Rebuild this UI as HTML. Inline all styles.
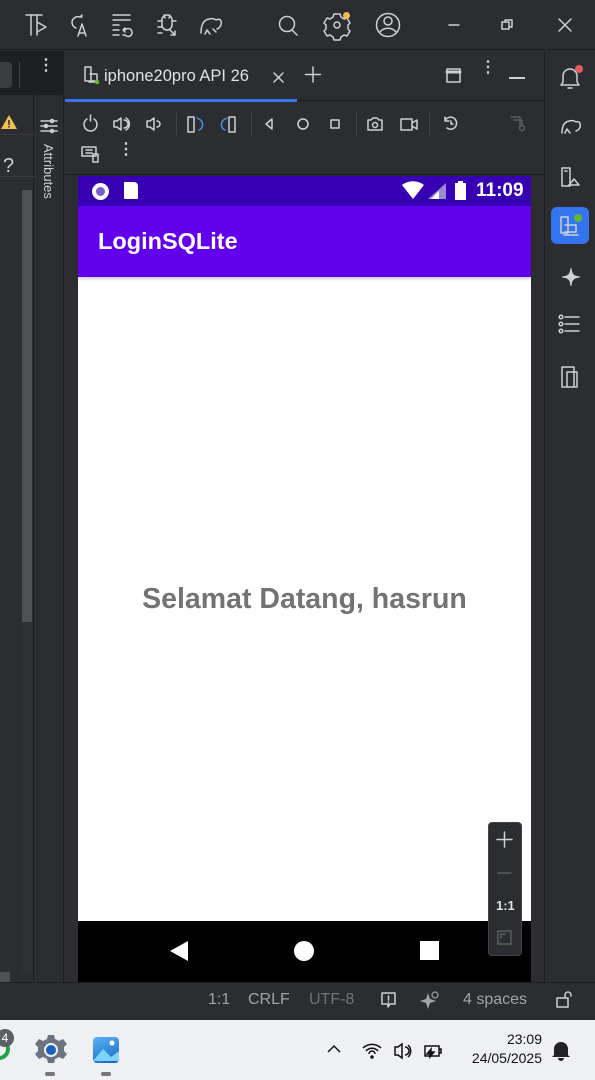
<!DOCTYPE html>
<html><head><style>
*{margin:0;padding:0;box-sizing:border-box}
body{width:595px;height:1080px;overflow:hidden;background:#2b2d30;font-family:"Liberation Sans",sans-serif;position:relative}
.a{position:absolute}
svg{position:absolute;overflow:visible}
.ic{stroke:#ced0d6;stroke-width:1.5;fill:none;stroke-linecap:round;stroke-linejoin:round}
</style></head><body>
<!-- title bar -->
<div class="a" style="left:0;top:0;width:595px;height:50px;background:#2b2d30;border-bottom:1px solid #1e1f22"></div>
<svg class="ic" style="left:0;top:0" width="595" height="50" stroke-width="1.7">
<path d="M26 15h16M31 15v20M37 15v20M37 22l9 5-9 5"/>
<path d="M72 22a6 6 0 0 1 8-5l2-2m0 2l-2 0M72 22a6 6 0 0 0 4 6"/><path d="M78 36l4-12 4 12M79 33h6"/>
<path d="M113 15h17M113 20h17M113 25h6M113 30h6M113 35h6M125 30a4 4 0 1 1 0 5h-2M125 28l-2 2 2 2"/>
<path d="M162 20a5 5 0 0 1 10 0v5a5 5 0 0 1-10 0zM158 21h4M172 21h4M158 27h4M158 33h4M164 15l1 3M170 15l-1 3M170 30l5 5M175 31v4h-4"/>
<path d="M201 33c0-7 2-13 8-14 3-1 6 0 7 1 2-1 4-1 5 1 1 3-1 7-4 8M205 34l2-4 3 4M213 29l3 3"/>
<circle cx="287" cy="24" r="7.5"/><path d="M292 30l5 5"/>
<circle cx="337" cy="25" r="3"/><path d="M334 14h6l1 3 3 2 3-1 3 5-2 2v4l2 2-3 5-3-1-3 2-1 3h-6l-1-3-3-2-3 1-3-5 2-2v-4l-2-2 3-5 3 1 3-2z"/>
<circle cx="388" cy="25" r="11.5"/><circle cx="388" cy="21" r="4"/><path d="M380 32c4-5 12-5 16 0"/>
<path d="M449 25h10"/><path d="M502 22h7v7h-7zM505 22v-2h7v7h-3"/><path d="M559 19l12 12M571 19l-12 12"/>
</svg>
<div class="a" style="left:343px;top:12px;width:7px;height:7px;border-radius:50%;background:#f0c050"></div>
<!-- left panel -->
<div class="a" style="left:0;top:51px;width:64px;height:44px;background:#1e1f22"></div>
<div class="a" style="left:0;top:62px;width:12px;height:26px;background:#3a3c40;border-radius:0 4px 4px 0"></div>
<div class="a" style="left:19px;top:62px;width:1px;height:26px;background:#43454a"></div>
<div class="a" style="left:38px;top:62px;color:#ced0d6;font-size:16px;font-weight:bold;line-height:8px">⋮</div>
<div class="a" style="left:0;top:95px;width:34px;height:887px;background:#2b2d30;border-right:1px solid #1e1f22"></div>
<svg style="left:0;top:112px" width="20" height="20"><path d="M9 3l8 14H1z" fill="#f0c050"/><rect x="8.2" y="8" width="1.6" height="5" fill="#333"/><rect x="8.2" y="14" width="1.6" height="1.6" fill="#333"/></svg>
<div class="a" style="left:0;top:134px;width:34px;height:1px;background:#393b40"></div>
<div class="a" style="left:3px;top:155px;color:#ced0d6;font-size:20px">?</div>
<div class="a" style="left:0;top:176px;width:34px;height:1px;background:#393b40"></div>
<div class="a" style="left:22px;top:190px;width:10px;height:432px;background:#4e5054"></div>
<div class="a" style="left:22px;top:622px;width:10px;height:350px;background:#2f3134"></div>
<div class="a" style="left:0;top:972px;width:10px;height:10px;background:#4e5054"></div>
<div class="a" style="left:35px;top:95px;width:29px;height:887px;background:#2b2d30;border-right:1px solid #1e1f22"></div>
<svg class="ic" style="left:40px;top:118px" width="20" height="20" stroke-width="1.2"><path d="M1 3h16M1 8h16M1 13h16"/><circle cx="12" cy="3" r="1.5"/><circle cx="6" cy="8" r="1.5"/><circle cx="12" cy="13" r="1.5"/></svg>
<div class="a" style="left:56px;top:144px;transform-origin:0 0;transform:rotate(90deg);color:#ced0d6;font-size:13px;white-space:nowrap">Attributes</div>
<!-- tab row -->
<div class="a" style="left:65px;top:51px;width:479px;height:50px;background:#2b2d30;border-bottom:1px solid #1e1f22"></div>
<div class="a" style="left:65px;top:99px;width:232px;height:3px;background:#3574f0"></div>
<svg class="ic" style="left:82px;top:66px" width="20" height="20" stroke-width="1.3"><path d="M3 1h6v14H3zM8 8h7v7H8M7 16h9" /><circle cx="15" cy="16" r="2.3" fill="#5fb832" stroke="none"/></svg>
<div class="a" style="left:104px;top:67px;color:#dfe1e5;font-size:16.5px">iphone20pro API 26</div>
<svg class="ic" style="left:273px;top:72px" width="12" height="12" stroke="#6f737a" stroke-width="1.2"><path d="M1 1l9 9M10 1l-9 9"/></svg>
<svg class="ic" style="left:305px;top:66px" width="18" height="18"><path d="M8 1v15M0.5 8.5h15"/></svg>
<svg class="ic" style="left:446px;top:68px" width="16" height="16"><rect x="1" y="1" width="13" height="13"/><path d="M1 4h13" stroke-width="3"/></svg>
<div class="a" style="left:480px;top:64px;color:#ced0d6;font-size:16px;font-weight:bold;line-height:8px">⋮</div>
<div class="a" style="left:509px;top:77px;width:16px;height:1.5px;background:#ced0d6"></div>
<!-- toolbar -->
<div class="a" style="left:65px;top:102px;width:479px;height:73px;background:#2b2d30;border-bottom:1px solid #1e1f22"></div>
<svg class="ic" style="left:0;top:0" width="545" height="180" stroke-width="1.3">
<path d="M87 119a6.5 6.5 0 1 0 7 0M90.5 115v6"/>
<path d="M114 121h3l4-3v12l-4-3h-3zM124 120a4 4 0 0 1 0 8M126 118a7 7 0 0 1 0 12"/>
<path d="M147 121h3l4-3v12l-4-3h-3zM157 121a3 3 0 0 1 0 6"/>
<path d="M188 117h6v15h-6z"/><path d="M199 119a6 6 0 0 1 0 11M199 119l-2-1" stroke="#4a88e8"/>
<path d="M229 117h6v15h-6z" /><path d="M225 119a6 6 0 0 0 0 11M225 119l2-1" stroke="#4a88e8"/>
<path d="M272 119l-6 5 6 5z"/><circle cx="303" cy="124" r="5"/><rect x="331" y="120" width="8" height="8"/>
<path d="M368 120h3l2-2h4l2 2h3v10h-14z"/><circle cx="375" cy="125" r="2.5"/>
<path d="M401 119h11v11h-11zM412 123l5-3v9l-5-3"/>
<path d="M445 121a6 6 0 1 1 2 7M445 117v4h4M451 121v3h2"/>
<path d="M511 117h9v8M514 120h8v6" stroke="#5a5d63"/><circle cx="522" cy="128" r="2.5" stroke="#5a5d63"/>
<path d="M82 147h14v9h-14zM86 150h6M86 153h6M93 154h5v8h-5z"/>
</svg>
<div class="a" style="left:176px;top:113px;width:1px;height:22px;background:#43454a"></div>
<div class="a" style="left:251px;top:113px;width:1px;height:22px;background:#43454a"></div>
<div class="a" style="left:356px;top:113px;width:1px;height:22px;background:#43454a"></div>
<div class="a" style="left:429px;top:113px;width:1px;height:22px;background:#43454a"></div>
<div class="a" style="left:118px;top:146px;color:#ced0d6;font-size:16px;font-weight:bold;line-height:8px">⋮</div>
<!-- device -->
<div class="a" style="left:78px;top:176px;width:453px;height:30px;background:#3700b3"></div>
<div class="a" style="left:92px;top:183px;width:17px;height:17px;border-radius:50%;background:#fff"></div>
<div class="a" style="left:96px;top:187px;width:9px;height:9px;border-radius:50%;background:#7a5fd0"></div>
<div class="a" style="left:124px;top:182px;width:14px;height:17px;background:#fff;border-radius:1px 4px 1px 1px"></div>
<svg style="left:400px;top:180px" width="80" height="22"><path d="M2 5a18 18 0 0 1 22 0L13 19z" fill="#fff"/><path d="M46 3v16H28z" fill="#9b8ad8"/><path d="M39 11v8h-8z" fill="#fff"/><rect x="55" y="3" width="11" height="17" fill="#fff"/><rect x="58" y="1" width="5" height="3" fill="#fff"/></svg>
<div class="a" style="left:476px;top:180px;color:#fff;font-size:19px;font-weight:bold">11:09</div>
<div class="a" style="left:78px;top:277px;width:453px;height:644px;background:#fff"></div>
<div class="a" style="left:78px;top:206px;width:453px;height:71px;background:#6200ee;box-shadow:0 2px 3px rgba(0,0,0,.2)"></div>
<div class="a" style="left:98px;top:228px;color:#fff;font-size:23.5px;font-weight:bold">LoginSQLite</div>
<div class="a" style="left:78px;top:583px;width:453px;text-align:center;color:#737373;font-size:28.5px;font-weight:bold">Selamat Datang, hasrun</div>
<div class="a" style="left:78px;top:921px;width:453px;height:61px;background:#000"></div>
<svg style="left:160px;top:938px" width="290" height="28"><path d="M28 3v20L10 13z" fill="#fff"/><circle cx="144" cy="13" r="10" fill="#fff"/><rect x="260" y="3" width="19" height="19" fill="#fff"/></svg>
<!-- zoom control -->
<div class="a" style="left:488px;top:822px;width:34px;height:134px;background:#2b2d30;border:1px solid #43454a;border-radius:4px"></div>
<svg class="ic" style="left:496px;top:830px" width="18" height="120"><path d="M8.5 2v15M1 9.5h15"/><path d="M2 43h13" stroke="#5a5d63"/><rect x="2" y="101" width="13" height="13" stroke="#5a5d63"/><path d="M5 104h4M5 104v4" stroke="#5a5d63"/></svg>
<div class="a" style="left:496px;top:898px;color:#dfe1e5;font-size:13px;font-weight:bold">1:1</div>
<!-- right bar -->
<div class="a" style="left:544px;top:51px;width:1px;height:931px;background:#1e1f22"></div>
<svg class="ic" style="left:545px;top:51px" width="50" height="350">
<path d="M18 31v-6a7 7 0 0 1 14 0v6l2 3H16zM23 37h4"/>
<path d="M17 82c0-7 2-11 7-12 3-1 6 0 7 1 2-1 4 0 4 2 1 3-1 6-4 7M20 82l2-4 3 4"/>
<path d="M17 117h8v18h-8zM24 134l5-6 5 6zM20 120h2"/>
<path d="M34 226c-5 0-8-3-8-8 0 5-3 8-8 8 5 0 8 3 8 8 0-5 3-8 8-8z" fill="#ced0d6"/>
<path d="M20 266h14M20 273h14M20 280h14"/><circle cx="16" cy="266" r="1.8"/><circle cx="16" cy="273" r="1.8"/><circle cx="16" cy="280" r="1.8"/>
<path d="M17 316h12v20h-12zM22 321h10v15h-10z"/>
</svg>
<svg style="left:545px;top:51px" width="50" height="60"><circle cx="34" cy="18" r="4" fill="#e55b5b"/></svg>
<div class="a" style="left:551px;top:207px;width:38px;height:37px;background:#3574f0;border-radius:6px"></div>
<svg class="ic" style="left:551px;top:207px" width="38" height="37" stroke="#fff" stroke-width="1.4"><path d="M10 10h7v16h-7zM14 18h11v7h-11M13 28h14"/><circle cx="27" cy="11" r="4" fill="#5fb832" stroke="none"/></svg>
<!-- status bar -->
<div class="a" style="left:0;top:982px;width:595px;height:38px;background:#2b2d30;border-top:1px solid #1e1f22"></div>
<div class="a" style="left:208px;top:991px;color:#a0a3aa;font-size:16px">1:1</div>
<div class="a" style="left:248px;top:991px;color:#a0a3aa;font-size:16px">CRLF</div>
<div class="a" style="left:309px;top:991px;color:#6f737a;font-size:16px">UTF-8</div>
<svg class="ic" style="left:380px;top:991px" width="20" height="20" stroke="#a0a3aa"><path d="M2 2h13v11h-5l-2 3v-3H2z"/><path d="M8.5 5v4M8.5 11v.5"/></svg>
<svg style="left:420px;top:990px" width="20" height="22"><path d="M8 3l2 6 6 2-6 2-2 6-2-6-6-2 6-2z" fill="#a0a3aa"/><circle cx="15" cy="5" r="3" fill="none" stroke="#a0a3aa" stroke-width="1.2"/></svg>
<div class="a" style="left:463px;top:991px;color:#a0a3aa;font-size:16px">4 spaces</div>
<svg class="ic" style="left:556px;top:991px" width="20" height="20" stroke="#a0a3aa" stroke-width="1.3"><rect x="1" y="7" width="11" height="9"/><path d="M9 7V4a3 3 0 0 1 6 0v1"/></svg>
<!-- taskbar -->
<div class="a" style="left:0;top:1020px;width:595px;height:60px;background:#eef0f3"></div>
<div class="a" style="left:-12px;top:1038px;width:22px;height:22px;border-radius:50%;border:4px solid #25a244"></div>
<div class="a" style="left:-4px;top:1029px;width:18px;height:18px;border-radius:50%;background:#5a6068;color:#fff;font-size:12px;text-align:center;line-height:18px">4</div>
<svg style="left:35px;top:1034px" width="32" height="32"><path d="M13 1h6l1 4 4 2 4-2 4 5-3 3v4l3 3-4 5-4-2-4 2-1 4h-6l-1-4-4-2-4 2-4-5 3-3v-4l-3-3 4-5 4 2 4-2z" fill="#6b7280"/><circle cx="16" cy="16" r="7" fill="#eef0f3"/><circle cx="16" cy="16" r="5" fill="#1c5fbf"/></svg>
<div class="a" style="left:45px;top:1072px;width:10px;height:4px;border-radius:2px;background:#777"></div>
<div class="a" style="left:93px;top:1037px;width:26px;height:26px;border-radius:4px;background:linear-gradient(160deg,#5ab4f5,#1565c0)"></div>
<svg style="left:93px;top:1037px" width="26" height="26"><path d="M0 24l10-12 8 8 8-6v10H0z" fill="#7fd3ff"/><circle cx="19" cy="6" r="2.5" fill="#fff"/></svg>
<div class="a" style="left:101px;top:1072px;width:10px;height:4px;border-radius:2px;background:#777"></div>
<svg style="left:320px;top:1036px" width="130" height="28" fill="none" stroke="#111" stroke-width="1.5"><path d="M8 16l6-6 6 6"/><path d="M43 12a13 13 0 0 1 18 0M46 15a8 8 0 0 1 12 0M49 18a3 3 0 0 1 6 0"/><circle cx="52" cy="21" r="1" fill="#111"/><path d="M75 11h3l4-3v14l-4-3h-3zM85 11a4 4 0 0 1 0 8M88 9a8 8 0 0 1 0 12"/><rect x="105" y="10" width="14" height="10"/><path d="M119 13h2v4h-2" /><path d="M107 18l4-5v3h3l-4 5v-3z" fill="#111"/></svg>
<div class="a" style="left:450px;top:1030px;width:92px;text-align:right;color:#111;font-size:14px;line-height:19px">23:09<br>24/05/2025</div>
<svg style="left:551px;top:1040px" width="20" height="22"><path d="M3 15v-6a7 7 0 0 1 14 0v6l2 2H1z M7 18h6a3 3 0 0 1-6 0z" fill="#222"/></svg>
</body></html>
